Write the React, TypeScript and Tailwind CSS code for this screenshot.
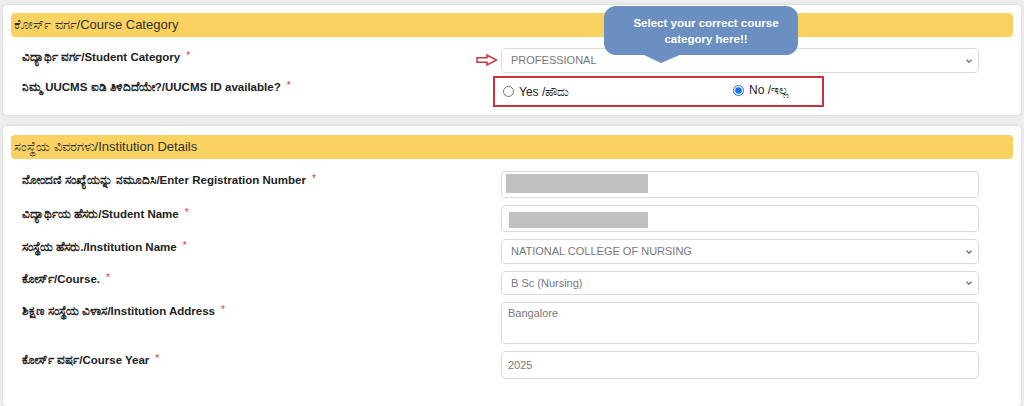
import React from 'react';

const font = 'font-["Liberation_Sans","Noto_Sans",Arial,sans-serif]';

const Star = () => <span className="ml-[6px] relative -top-[2px] text-[10px] font-normal text-[#e0323c]">*</span>;

const Chevron = () => (
    <svg width="8" height="6" viewBox="0 0 8 6" className="shrink-0">
        <path d="M1.5 1.8 L4 4.2 L6.5 1.8" fill="none" stroke="#666" strokeWidth="1.2" />
    </svg>
);

const RedArrow = () => (
    <svg width="22" height="12" viewBox="0 0 22 12" className="shrink-0">
        <path d="M1 3.8 H11 V1 L20.5 6 L11 11 V8.2 H1 Z" fill="none" stroke="#cf3540" strokeWidth="1.5" strokeLinejoin="miter" />
    </svg>
);

const SelectBox: React.FC<{ value: string; h: string }> = ({ value, h }) => (
    <div className={`${h} w-full rounded-[4px] border border-[#dcdcdc] bg-white flex items-center justify-between pl-[9px] pr-[5px] text-[11px] text-[#777]`}>
        <span>{value}</span>
        <Chevron />
    </div>
);

const Header: React.FC<{ title: string }> = ({ title }) => (
    <div className="h-[24px] rounded-[4px] bg-[#f9d262] flex items-center pl-[3px] text-[13px] text-[#333]">{title}</div>
);

const Label: React.FC<{ kn: string; en: string; pt?: string }> = ({ kn, en, pt = 'pt-[1px]' }) => (
    <div className={`w-[490px] pl-[11px] ${pt} text-[11.5px] leading-[14px] text-[#222] font-bold`}>
        <span>{kn}/{en}</span>
        <Star />
    </div>
);

const App: React.FC = () => {
    const rows = [
        { kn: 'ನೋಂದಣಿ ಸಂಖ್ಯೆಯನ್ನು ನಮೂದಿಸಿ', en: 'Enter Registration Number' },
        { kn: 'ವಿದ್ಯಾರ್ಥಿಯ ಹೆಸರು', en: 'Student Name' },
        { kn: 'ಸಂಸ್ಥೆಯ ಹೆಸರು.', en: 'Institution Name' },
        { kn: 'ಕೋರ್ಸ್', en: 'Course.' },
        { kn: 'ಶಿಕ್ಷಣ ಸಂಸ್ಥೆಯ ವಿಳಾಸ', en: 'Institution Address' },
        { kn: 'ಕೋರ್ಸ್ ವರ್ಷ', en: 'Course Year' },
    ];

    return (
        <div className={`min-h-[406px] bg-[#eeeeee] px-[3px] pt-[5px] ${font}`}>
            {/* course category */}
            <div className="relative bg-white rounded-[4px] shadow-[0_0_3px_rgba(0,0,0,0.15)] px-[8px] pt-[8px] pb-[8px]">
                <Header title="ಕೋರ್ಸ್ ವರ್ಗ/Course Category" />
                <div className="flex items-start mt-[11px]">
                    <div className="w-[490px] flex items-start justify-between pr-[3px]">
                        <div className="pl-[11px] pt-[2px] text-[11.5px] leading-[14px] text-[#222] font-bold">
                            <span>ವಿದ್ಯಾರ್ಥಿ ವರ್ಗ/Student Category</span>
                            <Star />
                        </div>
                        <div className="pt-[6px]"><RedArrow /></div>
                    </div>
                    <div className="w-[478px]">
                        <SelectBox value="PROFESSIONAL" h="h-[25px]" />
                    </div>
                </div>
                <div className="flex items-start mt-[3px]">
                    <Label kn="ನಿಮ್ಮ UUCMS ಐಡಿ ತಿಳಿದಿದೆಯೇ?" en="UUCMS ID available?" pt="pt-[4px]" />
                    <div className="-ml-[8px] w-[331px] h-[31px] border-2 border-[#c8323d] flex items-center pl-[8px] text-[12px] text-[#222]">
                        <label className="w-[230px] flex items-center gap-[5px]">
                            <input type="radio" name="uucms" className="w-[11px] h-[11px] m-0" />
                            <span>Yes /ಹೌದು</span>
                        </label>
                        <label className="flex items-center gap-[5px] -mt-[3px]">
                            <input type="radio" name="uucms" defaultChecked className="w-[11px] h-[11px] m-0 accent-[#1a73e8]" />
                            <span>No /ಇಲ್ಲ</span>
                        </label>
                    </div>
                </div>

                {/* tooltip bubble */}
                <div className="absolute left-[601px] top-[1px] w-[194px]">
                    <div className="h-[49px] rounded-[12px] bg-[#6b8fc0] flex flex-col items-center justify-center text-white font-bold text-[11.5px] leading-[16px] pl-[10px]">
                        <span>Select your correct course</span>
                        <span>category here!!</span>
                    </div>
                    <svg width="40" height="10" viewBox="0 0 40 10" className="ml-[38px] -mt-[1px] block">
                        <path d="M0 0 H40 L19 9 Z" fill="#6b8fc0" />
                    </svg>
                </div>
            </div>

            {/* institution details */}
            <div className="mt-[11px] bg-white rounded-[4px] shadow-[0_0_3px_rgba(0,0,0,0.15)] px-[8px] pt-[9px] pb-[27px]">
                <Header title="ಸಂಸ್ಥೆಯ ವಿವರಗಳು/Institution Details" />
                <div className="mt-[12px] flex flex-col gap-[7px]">
                    <div className="flex items-start">
                        <Label {...rows[0]} pt="pt-[2px]" />
                        <div className="w-[478px] h-[27px] rounded-[4px] border border-[#dcdcdc] bg-white pl-[4px] pt-[2px]">
                            <div className="w-[142px] h-[19px] bg-[#c0c0c0]" />
                        </div>
                    </div>
                    <div className="flex items-start">
                        <Label {...rows[1]} pt="pt-[2px]" />
                        <div className="w-[478px] h-[27px] rounded-[4px] border border-[#dcdcdc] bg-white pl-[7px] pt-[6px]">
                            <div className="w-[139px] h-[16px] bg-[#c0c0c0]" />
                        </div>
                    </div>
                    <div className="flex items-start">
                        <Label {...rows[2]} pt="pt-[1px]" />
                        <div className="w-[478px]"><SelectBox value="NATIONAL COLLEGE OF NURSING" h="h-[25px]" /></div>
                    </div>
                    <div className="flex items-start">
                        <Label {...rows[3]} pt="pt-[1px]" />
                        <div className="w-[478px]"><SelectBox value="B Sc (Nursing)" h="h-[24px]" /></div>
                    </div>
                    <div className="flex items-start">
                        <Label {...rows[4]} pt="pt-[2px]" />
                        <div className="w-[478px] h-[42px] rounded-[4px] border border-[#dcdcdc] bg-white px-[6px] pt-[3px] text-[11px] leading-[14px] text-[#777]">Bangalore</div>
                    </div>
                    <div className="flex items-start">
                        <Label {...rows[5]} pt="pt-[2px]" />
                        <div className="w-[478px] h-[28px] rounded-[4px] border border-[#dcdcdc] bg-white px-[6px] flex items-center text-[11px] text-[#777]">2025</div>
                    </div>
                </div>
            </div>
        </div>
    );
};

export default App;
